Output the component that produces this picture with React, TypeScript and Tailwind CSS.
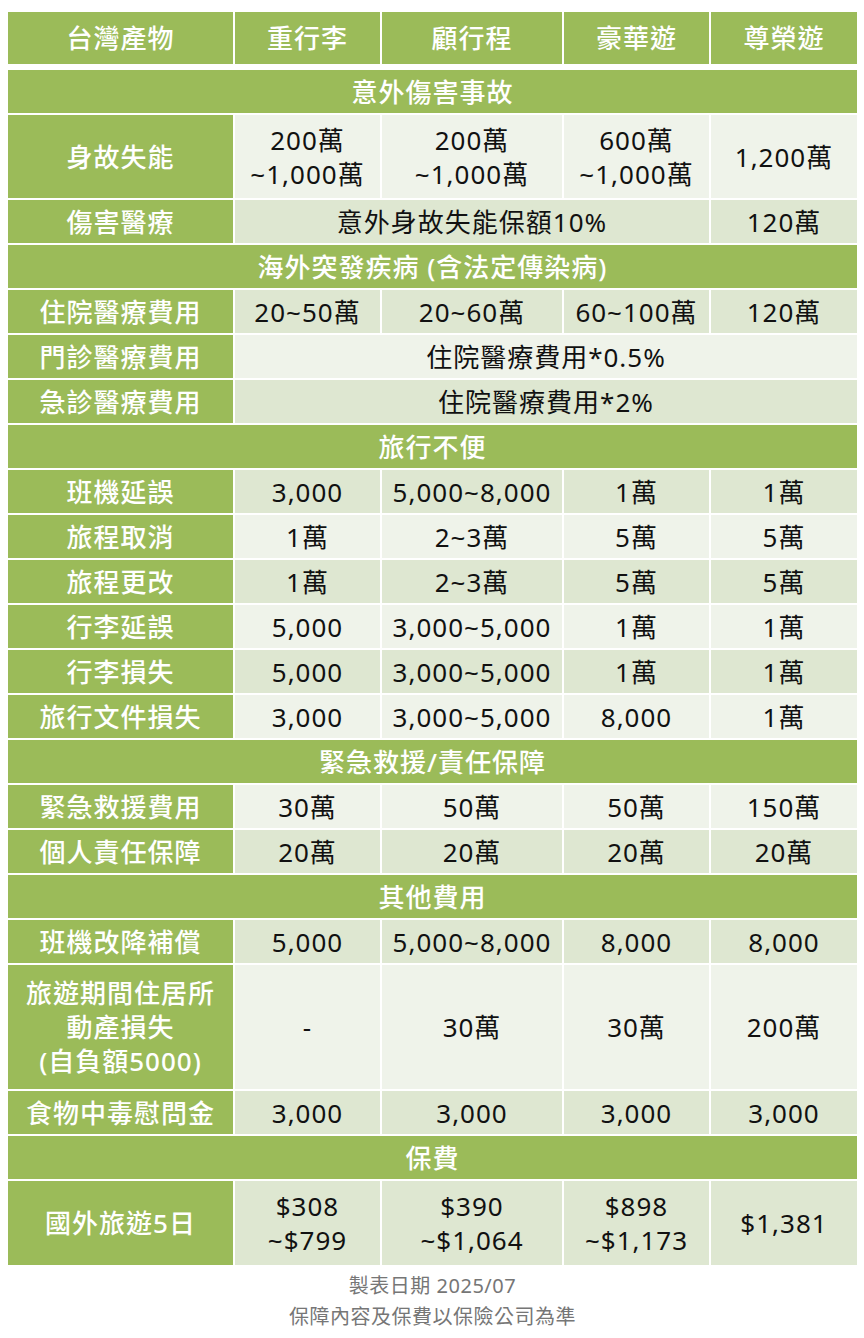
type Cell = { lines: string[]; span?: number };
type Row =
  | { kind: "section"; label: string }
  | { kind: "row"; label: string[]; cells: Cell[]; shade: "light" | "dark"; h: string };

const c = (...lines: string[]): Cell => ({ lines });
const s = (span: number, ...lines: string[]): Cell => ({ lines, span });

const rows: Row[] = [
  { kind: "section", label: "意外傷害事故" },
  {
    kind: "row",
    label: ["身故失能"],
    cells: [c("200萬", "~1,000萬"), c("200萬", "~1,000萬"), c("600萬", "~1,000萬"), c("1,200萬")],
    shade: "light",
    h: "h-[83px]",
  },
  { kind: "row", label: ["傷害醫療"], cells: [s(3, "意外身故失能保額10%"), c("120萬")], shade: "dark", h: "h-[43px]" },
  { kind: "section", label: "海外突發疾病 (含法定傳染病)" },
  { kind: "row", label: ["住院醫療費用"], cells: [c("20~50萬"), c("20~60萬"), c("60~100萬"), c("120萬")], shade: "dark", h: "h-[43px]" },
  { kind: "row", label: ["門診醫療費用"], cells: [s(4, "住院醫療費用*0.5%")], shade: "light", h: "h-[43px]" },
  { kind: "row", label: ["急診醫療費用"], cells: [s(4, "住院醫療費用*2%")], shade: "dark", h: "h-[43px]" },
  { kind: "section", label: "旅行不便" },
  { kind: "row", label: ["班機延誤"], cells: [c("3,000"), c("5,000~8,000"), c("1萬"), c("1萬")], shade: "dark", h: "h-[43px]" },
  { kind: "row", label: ["旅程取消"], cells: [c("1萬"), c("2~3萬"), c("5萬"), c("5萬")], shade: "light", h: "h-[43px]" },
  { kind: "row", label: ["旅程更改"], cells: [c("1萬"), c("2~3萬"), c("5萬"), c("5萬")], shade: "dark", h: "h-[43px]" },
  { kind: "row", label: ["行李延誤"], cells: [c("5,000"), c("3,000~5,000"), c("1萬"), c("1萬")], shade: "light", h: "h-[43px]" },
  { kind: "row", label: ["行李損失"], cells: [c("5,000"), c("3,000~5,000"), c("1萬"), c("1萬")], shade: "dark", h: "h-[43px]" },
  { kind: "row", label: ["旅行文件損失"], cells: [c("3,000"), c("3,000~5,000"), c("8,000"), c("1萬")], shade: "light", h: "h-[43px]" },
  { kind: "section", label: "緊急救援/責任保障" },
  { kind: "row", label: ["緊急救援費用"], cells: [c("30萬"), c("50萬"), c("50萬"), c("150萬")], shade: "light", h: "h-[43px]" },
  { kind: "row", label: ["個人責任保障"], cells: [c("20萬"), c("20萬"), c("20萬"), c("20萬")], shade: "dark", h: "h-[43px]" },
  { kind: "section", label: "其他費用" },
  { kind: "row", label: ["班機改降補償"], cells: [c("5,000"), c("5,000~8,000"), c("8,000"), c("8,000")], shade: "dark", h: "h-[43px]" },
  {
    kind: "row",
    label: ["旅遊期間住居所", "動產損失", "(自負額5000)"],
    cells: [c("-"), c("30萬"), c("30萬"), c("200萬")],
    shade: "light",
    h: "h-[124px]",
  },
  { kind: "row", label: ["食物中毒慰問金"], cells: [c("3,000"), c("3,000"), c("3,000"), c("3,000")], shade: "dark", h: "h-[43px]" },
  { kind: "section", label: "保費" },
  {
    kind: "row",
    label: ["國外旅遊5日"],
    cells: [c("$308", "~$799"), c("$390", "~$1,064"), c("$898", "~$1,173"), c("$1,381")],
    shade: "dark",
    h: "h-[84px]",
  },
];

const headers = ["台灣產物", "重行李", "顧行程", "豪華遊", "尊榮遊"];

const spanClass: Record<number, string> = {
  1: "col-span-1",
  2: "col-span-2",
  3: "col-span-3",
  4: "col-span-4",
};

const Lines = ({ lines }: { lines: string[] }) => (
  <>
    {lines.map((l, i) => (
      <span key={i} className="block">
        {l}
      </span>
    ))}
  </>
);

export default function App() {
  const grid = "grid grid-cols-[225px_145px_180px_145px_146px] gap-[2px]";

  return (
    <div className="min-h-screen bg-white font-['Noto_Sans','Noto_Sans_CJK_TC',sans-serif] text-[26px] leading-[34px] tracking-[1px]">
      <div className="w-[849px] ml-[8px] pt-[12px]">
        {/* header */}
        <div className={grid}>
          {headers.map((h) => (
            <div key={h} className="h-[52px] bg-[#9bbb59] text-white font-medium flex items-center justify-center">
              {h}
            </div>
          ))}
        </div>

        {/* body */}
        <div className={`${grid} mt-[6px]`}>
          {rows.map((r, i) =>
            r.kind === "section" ? (
              <div
                key={i}
                className="col-span-5 h-[43px] bg-[#9bbb59] text-white font-medium flex items-center justify-center"
              >
                {r.label}
              </div>
            ) : (
              <div key={i} className="contents">
                <div className={`${r.h} bg-[#9bbb59] text-white font-medium flex flex-col items-center justify-center text-center`}>
                  <Lines lines={r.label} />
                </div>
                {r.cells.map((cell, j) => (
                  <div
                    key={j}
                    className={`${r.h} ${spanClass[cell.span ?? 1]} ${
                      r.shade === "light" ? "bg-[#eff3ea]" : "bg-[#dee7d1]"
                    } text-[#111] flex flex-col items-center justify-center text-center`}
                  >
                    <Lines lines={cell.lines} />
                  </div>
                ))}
              </div>
            )
          )}
        </div>

        {/* footer */}
        <div className="mt-[5px] text-center text-[20px] leading-[31px] tracking-[0.5px] text-[#767676]">
          <p>製表日期 2025/07</p>
          <p>保障內容及保費以保險公司為準</p>
        </div>
      </div>
    </div>
  );
}
